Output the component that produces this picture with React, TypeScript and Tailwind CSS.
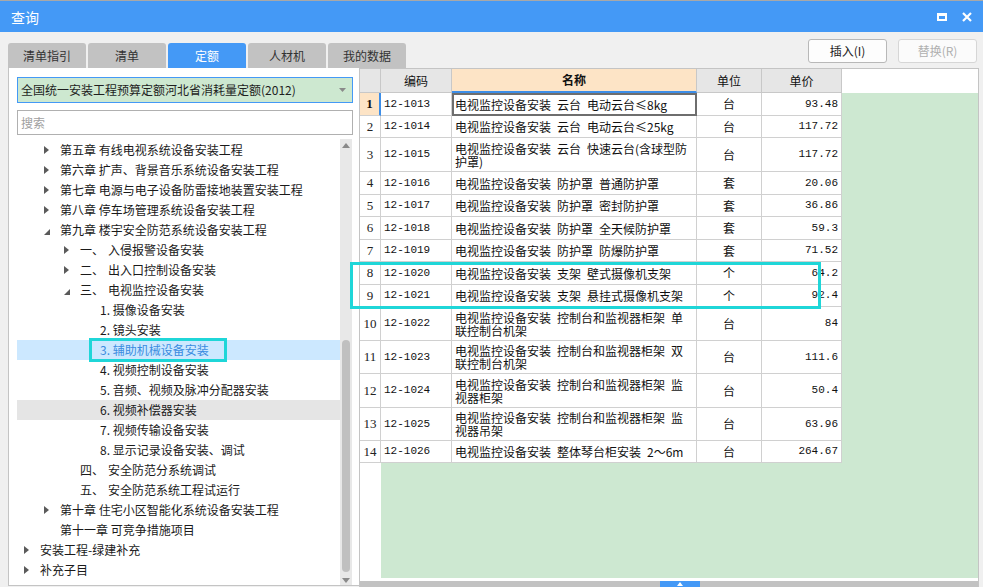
import React from "react";

const F = "font-['Noto_Sans_CJK_SC',sans-serif]";
const MONO = "font-['Liberation_Mono',monospace]";

type TreeItem = {
  lvl: 0 | 1 | 2 | 3;
  arrow: "r" | "d" | "";
  prefix?: string;
  text: string;
  state?: "sel" | "hover";
};

const tree: TreeItem[] = [
  { lvl: 1, arrow: "r", text: "第五章 有线电视系统设备安装工程" },
  { lvl: 1, arrow: "r", text: "第六章 扩声、背景音乐系统设备安装工程" },
  { lvl: 1, arrow: "r", text: "第七章 电源与电子设备防雷接地装置安装工程" },
  { lvl: 1, arrow: "r", text: "第八章 停车场管理系统设备安装工程" },
  { lvl: 1, arrow: "d", text: "第九章 楼宇安全防范系统设备安装工程" },
  { lvl: 2, arrow: "r", prefix: "一、", text: "入侵报警设备安装" },
  { lvl: 2, arrow: "r", prefix: "二、", text: "出入口控制设备安装" },
  { lvl: 2, arrow: "d", prefix: "三、", text: "电视监控设备安装" },
  { lvl: 3, arrow: "", text: "1. 摄像设备安装" },
  { lvl: 3, arrow: "", text: "2. 镜头安装" },
  { lvl: 3, arrow: "", text: "3. 辅助机械设备安装", state: "sel" },
  { lvl: 3, arrow: "", text: "4. 视频控制设备安装" },
  { lvl: 3, arrow: "", text: "5. 音频、视频及脉冲分配器安装" },
  { lvl: 3, arrow: "", text: "6. 视频补偿器安装", state: "hover" },
  { lvl: 3, arrow: "", text: "7. 视频传输设备安装" },
  { lvl: 3, arrow: "", text: "8. 显示记录设备安装、调试" },
  { lvl: 2, arrow: "", prefix: "四、", text: "安全防范分系统调试" },
  { lvl: 2, arrow: "", prefix: "五、", text: "安全防范系统工程试运行" },
  { lvl: 1, arrow: "r", text: "第十章 住宅小区智能化系统设备安装工程" },
  { lvl: 1, arrow: "", text: "第十一章 可竞争措施项目" },
  { lvl: 0, arrow: "r", text: "安装工程-绿建补充" },
  { lvl: 0, arrow: "r", text: "补充子目" },
];

const lvlPad: Record<number, string> = {
  0: "pl-[7px]",
  1: "pl-[27px]",
  2: "pl-[47px]",
  3: "pl-[67px]",
};

type Row = {
  n: number;
  code: string;
  name: string[];
  unit: string;
  price: string;
  h: string;
};

const S = "\u2002";
const rows: Row[] = [
  { n: 1, code: "12-1013", name: [`电视监控设备安装${S}云台${S}电动云台≤8kg`], unit: "台", price: "93.48", h: "h-[23px]" },
  { n: 2, code: "12-1014", name: [`电视监控设备安装${S}云台${S}电动云台≤25kg`], unit: "台", price: "117.72", h: "h-[22px]" },
  { n: 3, code: "12-1015", name: [`电视监控设备安装${S}云台${S}快速云台(含球型防`, "护罩)"], unit: "台", price: "117.72", h: "h-[34px]" },
  { n: 4, code: "12-1016", name: [`电视监控设备安装${S}防护罩${S}普通防护罩`], unit: "套", price: "20.06", h: "h-[23px]" },
  { n: 5, code: "12-1017", name: [`电视监控设备安装${S}防护罩${S}密封防护罩`], unit: "套", price: "36.86", h: "h-[22px]" },
  { n: 6, code: "12-1018", name: [`电视监控设备安装${S}防护罩${S}全天候防护罩`], unit: "套", price: "59.3", h: "h-[23px]" },
  { n: 7, code: "12-1019", name: [`电视监控设备安装${S}防护罩${S}防爆防护罩`], unit: "套", price: "71.52", h: "h-[22px]" },
  { n: 8, code: "12-1020", name: [`电视监控设备安装${S}支架${S}壁式摄像机支架`], unit: "个", price: "64.2", h: "h-[23px]" },
  { n: 9, code: "12-1021", name: [`电视监控设备安装${S}支架${S}悬挂式摄像机支架`], unit: "个", price: "92.4", h: "h-[22px]" },
  { n: 10, code: "12-1022", name: [`电视监控设备安装${S}控制台和监视器柜架${S}单`, "联控制台机架"], unit: "台", price: "84", h: "h-[34px]" },
  { n: 11, code: "12-1023", name: [`电视监控设备安装${S}控制台和监视器柜架${S}双`, "联控制台机架"], unit: "台", price: "111.6", h: "h-[33px]" },
  { n: 12, code: "12-1024", name: [`电视监控设备安装${S}控制台和监视器柜架${S}监`, "视器柜架"], unit: "台", price: "50.4", h: "h-[34px]" },
  { n: 13, code: "12-1025", name: [`电视监控设备安装${S}控制台和监视器柜架${S}监`, "视器吊架"], unit: "台", price: "63.96", h: "h-[33px]" },
  { n: 14, code: "12-1026", name: [`电视监控设备安装${S}整体琴台柜安装${S}2～6m`], unit: "台", price: "264.67", h: "h-[22px]" },
];

function ArrowRight() {
  return (
    <svg width="5" height="8" viewBox="0 0 5 8">
      <path d="M0 0L5 4L0 8Z" fill="#5a5a5a" />
    </svg>
  );
}
function ArrowDown() {
  return (
    <svg width="6" height="6" viewBox="0 0 6 6" className="mt-[4px]">
      <path d="M6 0V6H0Z" fill="#5a5a5a" />
    </svg>
  );
}

const tabs = ["清单指引", "清单", "定额", "人材机", "我的数据"];

export default function App() {
  return (
    <div className={`relative w-[983px] h-[587px] overflow-hidden bg-[#f0f0f0] flex flex-col ${F}`}>
      {/* Title bar */}
      <div className="h-[32px] shrink-0 border-t border-[#a8a8a8] bg-[#4499f6] flex items-center pl-[11px] pr-[6px]">
        <span className="text-white text-[14px] leading-none">查询</span>
        <div className="flex-1" />
        <div className="w-[10px] h-[8px] border-2 border-t-[3px] border-white mr-[15px]" />
        <svg width="10" height="10" viewBox="0 0 10 10" className="mr-[5px]">
          <path d="M1 1L9 9M9 1L1 9" stroke="white" strokeWidth="2.2" />
        </svg>
      </div>

      <div className="flex-1 flex">
        {/* Left column */}
        <div className="relative z-10 ml-[8px] w-[351px] flex flex-col">
          <div className="mt-[11px] h-[25px] flex gap-[2px] w-[398px] shrink-0">
            {tabs.map((t) => (
              <div
                key={t}
                className={
                  t === "定额"
                    ? "w-[78px] shrink-0 h-full rounded-t-[3px] bg-[#4499f6] text-white text-[12px] flex items-center justify-center"
                    : "w-[78px] shrink-0 h-full rounded-t-[3px] bg-[#c2c2c2] text-[#333] text-[12px] flex items-center justify-center"
                }
              >
                {t}
              </div>
            ))}
          </div>
          <div className="flex-1 mb-[1px] bg-white border-l border-b border-[#c4c4c4] pl-[8px] pt-[9px] flex flex-col">
            <div className="w-[336px] h-[26px] bg-[#cde8d0] border border-[#4499f6] flex items-center pl-[3px] pr-[6px]">
              <span className="text-[12px] text-[#1e1e1e] flex-1">全国统一安装工程预算定额河北省消耗量定额(2012)</span>
              <svg width="7" height="4" viewBox="0 0 7 4">
                <path d="M0 0H7L3.5 4Z" fill="#8a8a8a" />
              </svg>
            </div>
            <div className="mt-[7px] w-[336px] h-[25px] border border-[#b0b0b0] flex items-center pl-[3px]">
              <span className="text-[12px] text-[#a0a0a0]">搜索</span>
            </div>
            <div className="mt-[4px] flex-1 flex overflow-hidden">
              <div className="w-[323px] pt-[1px]">
                {tree.map((it, i) => (
                  <div
                    key={i}
                    className={`h-[20px] flex items-center ${lvlPad[it.lvl]} ${
                      it.state === "sel" ? "bg-[#cce8ff]" : it.state === "hover" ? "bg-[#e5e5e5]" : ""
                    }`}
                  >
                    <div className="w-[16px] h-[20px] flex items-center">
                      {it.arrow === "r" ? <ArrowRight /> : it.arrow === "d" ? <ArrowDown /> : null}
                    </div>
                    {it.prefix ? (
                      <span className="inline-block w-[28px] text-[12px] text-[#1a1a1a] leading-[20px]">{it.prefix}</span>
                    ) : null}
                    <span
                      className={`text-[12px] leading-[20px] whitespace-nowrap ${
                        it.state === "sel" ? "text-[#3a8ce0]" : "text-[#1a1a1a]"
                      }`}
                    >
                      {it.text}
                    </span>
                  </div>
                ))}
              </div>
              <div className="relative w-[12px] bg-[#e8e8e8]">
                <div className="h-[12px] flex items-center justify-center">
                  <svg width="8" height="5" viewBox="0 0 8 5">
                    <path d="M0 5H8L4 0Z" fill="#8a8a8a" />
                  </svg>
                </div>
                <div className="absolute left-[2px] top-[201px] w-[8px] h-[232px] rounded-full bg-[#c0c0c0]" />
                <div className="absolute bottom-[2px] left-0 w-[12px] h-[6px] flex items-center justify-center">
                  <svg width="8" height="5" viewBox="0 0 8 5">
                    <path d="M0 0H8L4 5Z" fill="#8a8a8a" />
                  </svg>
                </div>
              </div>
            </div>
          </div>
        </div>

        {/* Right column */}
        <div className="w-[620px] flex flex-col">
          <div className="h-[36px] flex justify-end items-start pt-[7px] pr-[2px] gap-[11px]">
            <div className="w-[79px] h-[24px] rounded-[3px] border border-[#b8b8b8] bg-[#fdfdfd] flex items-center justify-center text-[12px] text-[#222]">
              插入(I)
            </div>
            <div className="w-[79px] h-[24px] rounded-[3px] border border-[#d6d6d6] bg-[#fbfbfb] flex items-center justify-center text-[12px] text-[#b0b0b0]">
              替换(R)
            </div>
          </div>
          <div className="flex-1 bg-white border border-b-0 border-[#c4c4c4] flex flex-col">
            {/* header */}
            <div className="h-[24px] flex shrink-0">
              <div className="w-[21px] h-full bg-[#e6e6e6] border-r border-b border-[#c8c8c8]" />
              <div className="w-[71px] h-full bg-[#e6e6e6] border-r border-b border-[#c8c8c8] flex items-center justify-center text-[12px] text-[#111]">
                编码
              </div>
              <div className="w-[245px] h-full bg-[#fde4c6] border-r border-[#c8c8c8] border-b-2 border-b-[#3d8ee8] flex items-center justify-center text-[12px] font-bold text-[#111]">
                名称
              </div>
              <div className="w-[65px] h-full bg-[#e6e6e6] border-r border-b border-[#c8c8c8] flex items-center justify-center text-[12px] text-[#111]">
                单位
              </div>
              <div className="w-[80px] h-full bg-[#e6e6e6] border-r border-b border-[#c8c8c8] flex items-center justify-center text-[12px] text-[#111]">
                单价
              </div>
              <div className="flex-1 bg-white" />
            </div>
            {/* rows */}
            {rows.map((r) => (
              <div key={r.n} className={`${r.h} flex shrink-0`}>
                <div
                  className={
                    r.n === 1
                      ? "w-[21px] h-full bg-[#fde4c6] border-r-2 border-r-[#3d8ee8] border-b border-[#d0d0d0] flex items-center justify-center font-['Liberation_Serif',serif] font-bold text-[13px] text-[#111]"
                      : "w-[21px] h-full border-r border-b border-[#d0d0d0] flex items-center justify-center font-['Liberation_Serif',serif] text-[13px] text-[#222]"
                  }
                >
                  {r.n}
                </div>
                <div className={`w-[71px] h-full border-r border-b border-[#d0d0d0] flex items-center pl-[3px] ${MONO} text-[11px] text-[#111]`}>
                  {r.code}
                </div>
                <div className="relative w-[245px] h-full border-r border-b border-[#d0d0d0] flex flex-col justify-center pl-[3px] text-[12px] leading-[13px] text-[#111] whitespace-nowrap">
                  {r.name.map((l, i) => (
                    <div key={i}>{l}</div>
                  ))}
                  {r.n === 1 ? (
                    <div className="absolute left-0 top-0 -right-[1px] -bottom-[1px] border-2 border-[#6e6e6e]" />
                  ) : null}
                </div>
                <div className="w-[65px] h-full border-r border-b border-[#d0d0d0] flex items-center justify-center text-[12px] text-[#111]">
                  {r.unit}
                </div>
                <div className={`w-[80px] h-full border-r border-b border-[#d0d0d0] flex items-center justify-end pr-[3px] ${MONO} text-[11px] text-[#111]`}>
                  {r.price}
                </div>
                <div className="flex-1 bg-[#cde8d1]" />
              </div>
            ))}
            <div className="flex-1 flex">
              <div className="w-[21px] bg-white" />
              <div className="flex-1 bg-[#cde8d1]" />
            </div>
            <div className="h-[3px] bg-white shrink-0" />
            <div className="relative h-[6px] bg-[#c2c2c2] shrink-0">
              <div className="absolute left-[300px] top-0 w-[40px] h-full bg-[#4499f6] flex items-center justify-center">
                <svg width="6" height="4" viewBox="0 0 6 4">
                  <path d="M0 4H6L3 0Z" fill="white" />
                </svg>
              </div>
            </div>
          </div>
        </div>
      </div>

      {/* annotation boxes */}
      <div className="absolute z-20 left-[89px] top-[338px] w-[138px] h-[24px] border-[3px] border-[#1fd6d8] pointer-events-none" />
      <div className="absolute z-20 left-[350px] top-[262px] w-[471px] h-[47px] border-[3px] border-[#1fd6d8] pointer-events-none" />
    </div>
  );
}
